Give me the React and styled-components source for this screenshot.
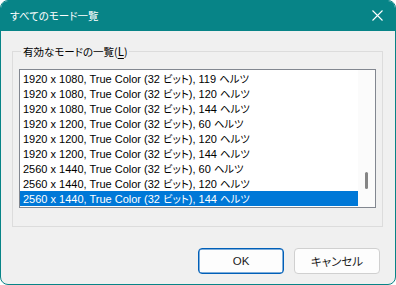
import React from "react";
import styled, {createGlobalStyle, css} from "styled-components";

const GlobalStyle = createGlobalStyle`
  html, body {
    margin: 0;
    padding: 0;
    background: #ffffff;
  }
  body {
    font-family: "Noto Sans CJK JP", sans-serif;
    font-size: 12px;
  }
`;

const modes = [
    {res: "1920 x 1080", hz: 119},
    {res: "1920 x 1080", hz: 120},
    {res: "1920 x 1080", hz: 144},
    {res: "1920 x 1200", hz: 60},
    {res: "1920 x 1200", hz: 120},
    {res: "1920 x 1200", hz: 144},
    {res: "2560 x 1440", hz: 60},
    {res: "2560 x 1440", hz: 120},
    {res: "2560 x 1440", hz: 144},
];

const CloseIcon = () => (
    <svg width="11" height="11" viewBox="0 0 11 11">
        <path d="M0.5 0.5 L10.5 10.5 M10.5 0.5 L0.5 10.5" stroke="#ffffff" strokeWidth="1.1" fill="none"/>
    </svg>
);

const App = () => {
    const selected = modes.length - 1;

    return (
        <>
            <GlobalStyle/>
            <Window>
                <TitleBar>
                    <Title>すべてのモード一覧</Title>
                    <CloseButton><CloseIcon/></CloseButton>
                </TitleBar>
                <Content>
                    <GroupBox>
                        <GroupLabel>有効なモードの一覧(<u>L</u>)</GroupLabel>
                        <ListBox>
                            <Rows>
                                {modes.map((mode, index) =>
                                    <Row key={index} selected={index === selected}>
                                        {mode.res}, True Color (32 <Jp>ビット</Jp>), {mode.hz} <Jp>ヘルツ</Jp>
                                    </Row>)
                                }
                            </Rows>
                            <ScrollTrack>
                                <Thumb/>
                            </ScrollTrack>
                        </ListBox>
                    </GroupBox>
                    <ButtonRow>
                        <Button primary>OK</Button>
                        <Button><Jp>キャンセル</Jp></Button>
                    </ButtonRow>
                </Content>
            </Window>
        </>
    );
}

const Window = styled.div`
  box-sizing: border-box;
  width: 396px;
  height: 285px;
  border: 1px solid #078487;
  border-radius: 8px;
  overflow: hidden;
  background-color: #f0f0f0;
  display: flex;
  flex-direction: column;
`;

const TitleBar = styled.div`
  height: 30px;
  background-color: #078487;
  display: flex;
  align-items: center;
  justify-content: space-between;
  padding: 0 0 0 9px;
`;

const Title = styled.div`
  color: #ffffff;
  font-feature-settings: "palt";
  font-size: 10.5px;
  margin-top: -1px;
`;

const CloseButton = styled.div`
  width: 34px;
  height: 30px;
  display: flex;
  align-items: center;
  justify-content: center;
  margin-right: 1px;
  margin-top: -2px;
`;

const Content = styled.div`
  flex: 1;
  display: flex;
  flex-direction: column;
  padding: 20px 12px 0 11px;
`;

const GroupBox = styled.div`
  position: relative;
  box-sizing: border-box;
  width: 371px;
  height: 176px;
  border: 1px solid #dcdcdc;
  padding: 17px 6px 0 6px;
`;

const GroupLabel = styled.div`
  position: absolute;
  top: -9px;
  left: 8px;
  padding: 0 2px;
  background-color: #f0f0f0;
  color: #000000;
  font-feature-settings: "palt";
  font-size: 10.5px;
  line-height: 16px;

  u {
    font-size: 11.5px;
    text-underline-offset: 2px;
  }
`;

const Jp = styled.span`
  font-family: "Noto Sans CJK JP", sans-serif;
  font-size: 10.4px;
  font-feature-settings: "palt";
`;

const ListBox = styled.div`
  box-sizing: border-box;
  width: 357px;
  height: 139px;
  border: 1px solid #828790;
  background-color: #ffffff;
  display: flex;
`;

const Rows = styled.div`
  flex: 1;
  padding-top: 1px;
  overflow: hidden;
`;

const Row = styled.div`
  height: 15px;
  line-height: 15px;
  padding-left: 3px;
  white-space: nowrap;
  color: #000000;
  font-family: "Liberation Sans", sans-serif;
  font-size: 11px;

  ${({selected}) => selected && css`
    background-color: #0078d7;
    color: #ffffff;
  `}
`;

const ScrollTrack = styled.div`
  width: 17px;
  background-color: #fbfbfb;
  position: relative;
`;

const Thumb = styled.div`
  position: absolute;
  left: 7px;
  top: 102px;
  width: 3px;
  height: 17px;
  border-radius: 2px;
  background-color: #858585;
`;

const ButtonRow = styled.div`
  display: flex;
  justify-content: flex-end;
  gap: 10px;
  margin-top: 21px;
  padding-right: 3px;
`;

const Button = styled.button`
  box-sizing: border-box;
  width: 86px;
  height: 26px;
  border-radius: 4px;
  background-color: #fdfdfd;
  border: 1px solid ${({primary}) => primary ? "#005fb8" : "#d0d0d0"};
  box-shadow: ${({primary}) => primary ? "inset 0 0 0 0.5px #005fb8" : "none"};
  color: #1b1b1b;
  font-family: "Liberation Sans", "Noto Sans CJK JP", sans-serif;
  font-size: 11.5px;
  padding: 0;

  ${Jp} {
    font-size: 11.5px;
  }
`;

export default App;
